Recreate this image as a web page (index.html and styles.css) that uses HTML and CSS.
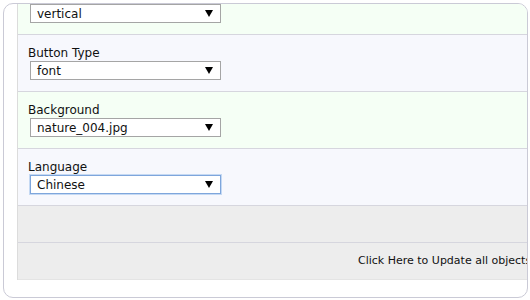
FILE: index.html
```
<!DOCTYPE html>
<html lang="en">
<head>
    <meta charset="UTF-8">
    <title>Settings</title>
    <link rel="stylesheet" href="styles.css">
</head>
<body>
    <div class="box">
        <div class="opts">
            <div class="row green top">
                <div class="sel"><span>vertical</span><i class="arr"></i></div>
            </div>
            <div class="row blue">
                <p class="lbl">Button Type</p>
                <div class="sel"><span>font</span><i class="arr"></i></div>
            </div>
            <div class="row green">
                <p class="lbl">Background</p>
                <div class="sel"><span>nature_004.jpg</span><i class="arr"></i></div>
            </div>
            <div class="row blue">
                <p class="lbl">Language</p>
                <div class="sel focus"><span>Chinese</span><i class="arr"></i></div>
            </div>
            <div class="row gray bar"></div>
            <div class="row gray bar upd">Click Here to Update all objects</div>
        </div>
    </div>
</body>
</html>
```

FILE: styles.css
```
body {
    margin: 0;
    background: #fff;
    font-family: "DejaVu Sans", sans-serif;
    font-size: 11px;
    color: #111;
}

.box {
    margin: 3px;
    width: 525px;
    height: 295px;
    border: 1px solid #cacad6;
    border-radius: 10px;
    overflow: hidden;
    padding: 0 0 0 13px;
    box-sizing: border-box;
}

.opts {
    width: 700px;
    border-left: 1px solid #dcdcdc;
}

.row {
    border-bottom: 1px solid #d6d6de;
    padding: 11px 0 10px 10px;
    height: 57px;
    box-sizing: border-box;
}

.row.top {
    padding-top: 0;
    height: 31px;
}

.green {
    background: #f5fff5;
}

.blue {
    background: #f7f8fd;
}

.gray {
    background: #ededed;
}

.bar {
    height: 37px;
    padding: 0;
}

.upd {
    line-height: 36px;
    padding-left: 340px;
    font-size: 11px;
    border-bottom-color: #e4e4e4;
}

.lbl {
    margin: 0;
    height: 14px;
    line-height: 14px;
    font-size: 12px;
}

.sel {
    margin: 1px 0 0 2px;
    width: 191px;
    height: 19px;
    border: 1px solid #a5a5a5;
    background: #fff;
    box-sizing: border-box;
    display: flex;
    align-items: center;
    justify-content: space-between;
    padding: 0 7px 0 6px;
    font-size: 12px;
}

.top .sel {
    margin-top: 0;
}

.sel.focus {
    border-color: #7ea6dc;
    box-shadow: 0 0 0 1px #c5d9f3;
}

.arr {
    width: 0;
    height: 0;
    border-left: 4px solid transparent;
    border-right: 4px solid transparent;
    border-top: 7px solid #000;
}
```
